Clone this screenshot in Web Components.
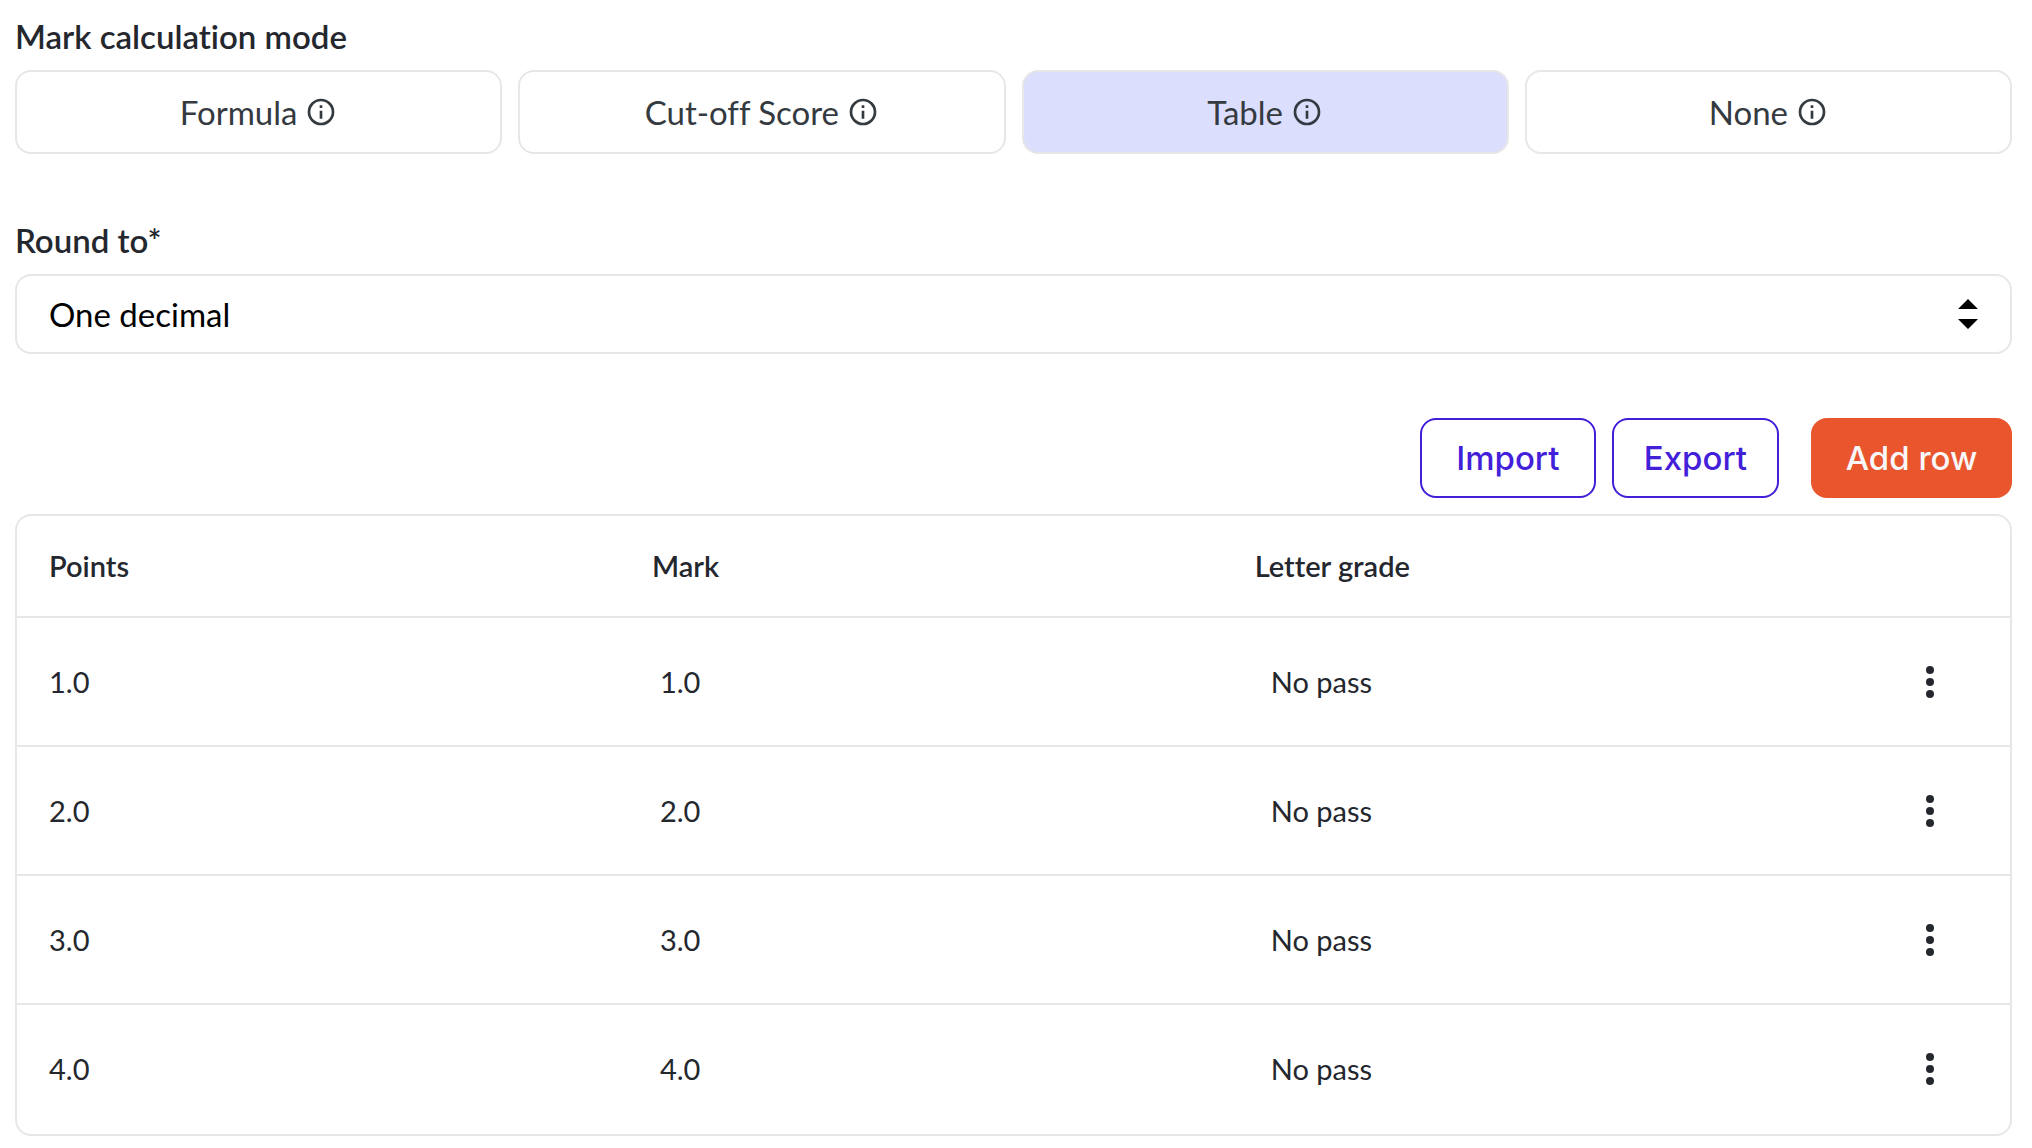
<!DOCTYPE html>
<html lang="en">
<head>
<meta charset="utf-8">
<meta name="viewport" content="width=device-width, initial-scale=1">
<title>Mark calculation</title>
<style>
  :root {
    --line: #e7e7e7;
    --ink: #24272e;
    --ink-soft: #343a40;
    --accent: #431fd9;
    --primary: #e9562e;
    --selected: #dcdefe;
    --radius: 16px;
  }
  body {
    margin: 0;
    background: #fff;
    color: var(--ink);
    font: 400 33px/40px Lato, "Open Sans", sans-serif;
    font-variant-ligatures: no-common-ligatures;
  }
</style>
</head>
<body>
<grading-page></grading-page>

<script>
const define = (name, html, setup) =>
  customElements.define(name, class extends HTMLElement {
    connectedCallback() {
      if (this.shadowRoot) return;
      const template = document.createElement('template');
      template.innerHTML = html;
      this.attachShadow({ mode: 'open' }).append(template.content.cloneNode(true));
      if (setup) setup(this, this.shadowRoot);
    }
  });

define('info-icon', `
  <style>
    :host { display: block; width: 32px; height: 32px; }
    svg { display: block; }
  </style>
  <svg width="32" height="32" viewBox="0 0 24 24" fill="currentColor" aria-hidden="true">
    <path d="M11 7h2v2h-2zM11 11h2v6h-2zM12 2a10 10 0 1 0 0 20a10 10 0 1 0 0-20zM12 20a8 8 0 1 1 0-16a8 8 0 1 1 0 16z"/>
  </svg>`);

define('mode-picker', `
  <style>
    :host { display: block; }
    fieldset { margin: 0; padding: 0; border: 0; min-width: 0; }
    legend { padding: 0; margin-bottom: 14px; font-weight: 600; }
    .options { display: grid; grid-template-columns: repeat(4, 1fr); gap: 16px; }
    label {
      display: flex; align-items: center; justify-content: center; gap: 8px;
      padding: 20px 24px; border: 2px solid var(--line); border-radius: var(--radius);
      color: var(--ink-soft); cursor: pointer;
    }
    label:has(input:checked) { background: var(--selected); }
    label:has(input:focus-visible) { outline: 2px solid var(--accent); }
    input { appearance: none; position: absolute; width: 0; height: 0; margin: 0; outline: 0; }
  </style>
  <fieldset>
    <legend>Mark calculation mode</legend>
    <div class="options">
      <label><input type="radio" name="mode" value="formula">Formula<info-icon></info-icon></label>
      <label><input type="radio" name="mode" value="cutoff">Cut-off Score<info-icon></info-icon></label>
      <label><input type="radio" name="mode" value="table" checked>Table<info-icon></info-icon></label>
      <label><input type="radio" name="mode" value="none">None<info-icon></info-icon></label>
    </div>
  </fieldset>`);

define('round-select', `
  <style>
    :host { display: flex; flex-direction: column; gap: 14px; }
    label { font-weight: 600; }
    .field { display: grid; align-items: center; }
    select, svg { grid-area: 1 / 1; }
    select {
      appearance: none; width: 100%; height: 80px; margin: 0; padding: 0 72px 0 32px;
      border: 2px solid var(--line); border-radius: var(--radius);
      background: #fff; color: #000; font: inherit; cursor: pointer;
    }
    svg { justify-self: end; margin-right: 34px; pointer-events: none; }
  </style>
  <label for="round">Round to*</label>
  <div class="field">
    <select id="round">
      <option>One decimal</option>
    </select>
    <svg width="20" height="30" viewBox="0 0 20 30" aria-hidden="true"><path d="M0 10L10 0l10 10zM0 20h20L10 30z"/></svg>
  </div>`);

define('action-button', `
  <style>
    :host { display: block; }
    button {
      height: 80px; padding: 0 30px; border: 2px solid var(--accent); border-radius: var(--radius);
      background: #fff; color: var(--accent); font: 500 33px/40px Inter, sans-serif; cursor: pointer;
    }
    :host([wide]) button { min-width: 176px; }
    :host([primary]) button {
      min-width: 201px; border-color: var(--primary); background: var(--primary); color: #f8f8fa;
    }
  </style>
  <button type="button"><slot></slot></button>`);

define('row-menu', `
  <style>
    :host { display: block; }
    button { display: block; width: 48px; height: 48px; margin: 0; padding: 0; border: 0; background: none; color: inherit; cursor: pointer; }
    svg { display: block; margin: auto; }
  </style>
  <button type="button" aria-label="Row actions">
    <svg width="8" height="32" viewBox="0 0 8 32" fill="currentColor" aria-hidden="true"><circle cx="4" cy="4" r="4"/><circle cx="4" cy="16" r="4"/><circle cx="4" cy="28" r="4"/></svg>
  </button>`);

define('grade-table', `
  <style>
    :host { display: block; border: 2px solid var(--line); border-radius: var(--radius); font-size: 29px; }
    table { width: 100%; border-collapse: separate; border-spacing: 0; table-layout: fixed; }
    th, td {
      box-sizing: border-box; padding: 0 0 0 32px; border-bottom: 2px solid var(--line);
      text-align: left; font-weight: 400;
    }
    th { height: 102px; font-weight: 600; }
    td { height: 129px; }
    tbody tr:last-child td { border-color: transparent; }
    td:nth-child(2) { padding-left: 40px; }
    td:nth-child(3) { padding-left: 48px; }
    .points, .mark { width: 30.25%; }
    .menu { width: 104px; }
    .menu, td:last-child { padding-left: 0; }
  </style>
  <table>
    <thead>
      <tr><th class="points" scope="col">Points</th><th class="mark" scope="col">Mark</th><th scope="col">Letter grade</th><th class="menu"></th></tr>
    </thead>
    <tbody></tbody>
  </table>`, (host, root) => {
  const body = root.querySelector('tbody');
  for (const value of ['1.0', '2.0', '3.0', '4.0']) {
    const row = body.insertRow();
    for (const text of [value, value, 'No pass']) row.insertCell().textContent = text;
    row.insertCell().append(document.createElement('row-menu'));
  }
});

define('grading-page', `
  <style>
    :host { display: block; padding: 16px 20px 12px 15px; }
    round-select { margin-top: 66px; }
    .actions { display: flex; justify-content: flex-end; gap: 16px; margin: 64px 0 16px; }
    action-button[primary] { margin-left: 16px; }
  </style>
  <main>
    <mode-picker></mode-picker>
    <round-select></round-select>
    <div class="actions">
      <action-button wide>Import</action-button>
      <action-button>Export</action-button>
      <action-button primary>Add row</action-button>
    </div>
    <grade-table></grade-table>
  </main>`);
</script>
</body>
</html>
